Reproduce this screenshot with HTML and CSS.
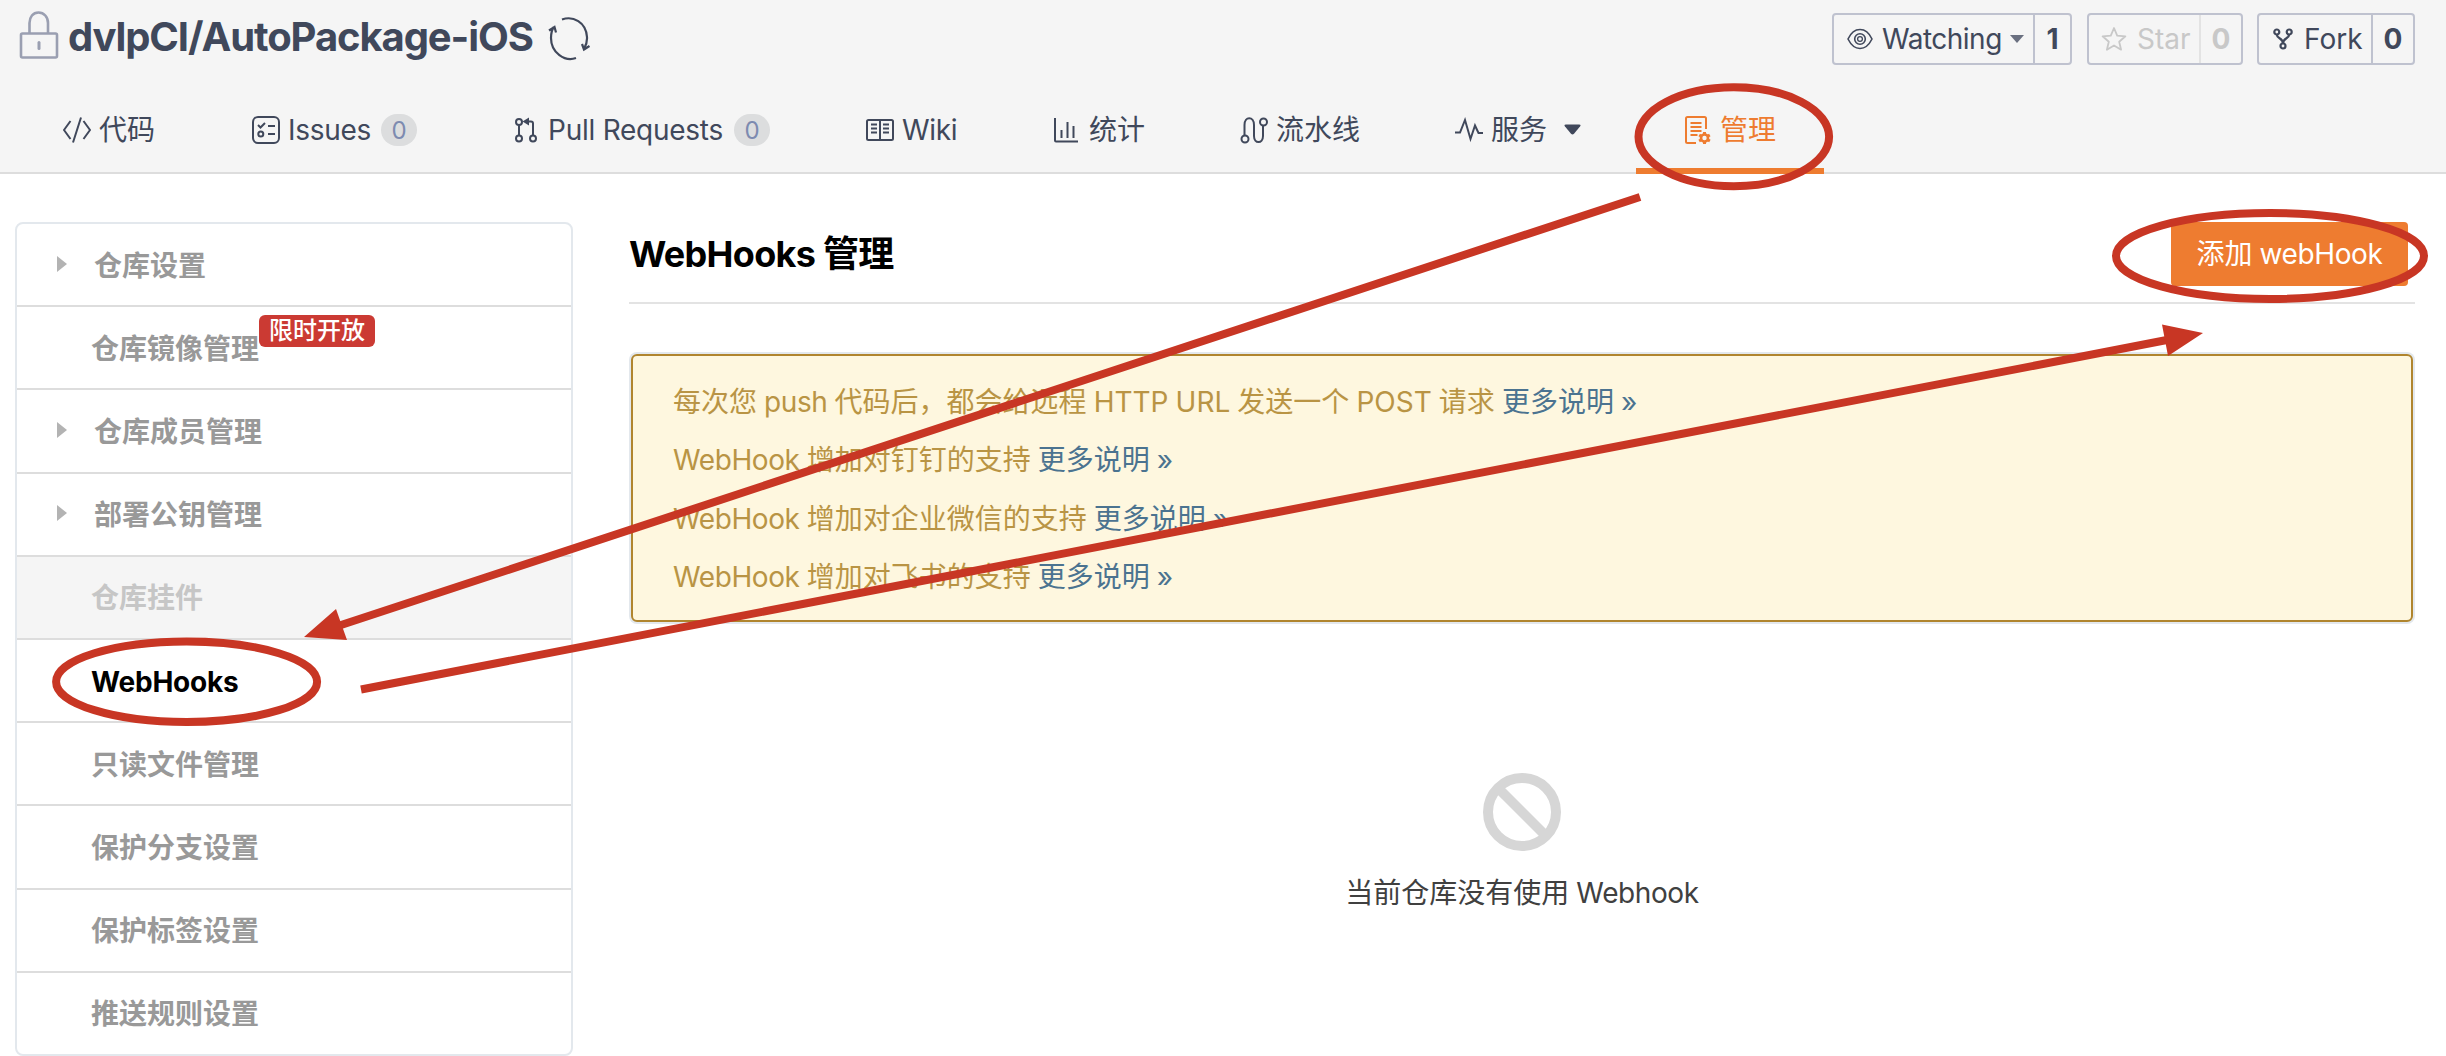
FILE: index.html
```html
<!DOCTYPE html>
<html lang="zh-CN">
<head>
<meta charset="utf-8">
<title>WebHooks 管理</title>
<link rel="stylesheet" href="styles.css">
</head>
<body>
<header class="repo-header">
  <div class="repo-top">
    <svg class="lock" width="40" height="54" viewBox="0 0 40 54" fill="none" stroke="#9a9fb1" stroke-width="2.6"><rect x="2" y="23.5" width="36" height="24" rx="1.5"/><path d="M10.500 23V13c0-6 3.500-10.500 9-10.500S29 7 29 13v10"/><path d="M20 32.500v6" stroke-linecap="round" stroke-width="3"/></svg>
    <h1 class="repo-name">dvlpCI/AutoPackage-iOS</h1>
    <svg class="sync" width="42" height="48" viewBox="0 0 42 48" fill="none" stroke="#40485b" stroke-width="2.200"><path d="M14 4.500C25 .5 38 7 39 22c.3 5-.8 8-2.800 11.500M28 43C17 47 3 38 3 23c0-5 .7-8 2.800-11M1 15.500l5.500-3.500 1.500 5.500M41.500 31l-5.500 3.500L34 29"/></svg>
    <div class="actions">
      <div class="action watch">
        <span class="action-main"><svg width="26" height="22" viewBox="0 0 26 22" fill="none" stroke="#40485b" stroke-width="1.600"><path d="M1 11C4 4.500 8 1.500 13 1.500S22 4.500 25 11c-3 6-7 9.500-12 9.500S4 17 1 11z"/><circle cx="13" cy="11" r="5.300"/><circle cx="13" cy="11" r="2.400" stroke-width="1.300"/></svg><span class="w-label">Watching</span><i class="caret"></i></span><b class="count">1</b>
      </div>
      <div class="action star">
        <span class="action-main"><svg width="26" height="26" viewBox="0 0 26 26" fill="none" stroke="#c8c8c8" stroke-width="1.800" stroke-linejoin="round"><path d="M13 2l3.200 7.600 8.200.7-6.200 5.400 1.900 8L13 19.400l-7.100 4.300 1.900-8L1.600 10.300l8.200-.7z"/></svg><span class="s-label">Star</span></span><b class="count">0</b>
      </div>
      <div class="action fork">
        <span class="action-main"><svg width="20" height="22" viewBox="0 0 20 22" fill="none" stroke="#40485b" stroke-width="2.200"><circle cx="3.800" cy="4" r="2.500"/><circle cx="16.200" cy="4" r="2.500"/><circle cx="10" cy="18" r="2.500"/><path d="M3.800 6.500c0 4.500 6.200 3 6.200 9 0-6 6.200-4.500 6.200-9"/></svg><span class="f-label">Fork</span></span><b class="count">0</b>
      </div>
    </div>
  </div>
  <nav class="tabs">
    <a class="tab code"><svg width="28" height="28" viewBox="0 0 28 28"><path d="M7.500 5L1 14l6.500 9M20.500 5L27 14l-6.500 9M18 1.500L10 26.500"/></svg>代码</a>
    <a class="tab issues"><svg width="28" height="28" viewBox="0 0 28 28"><rect x="1" y="1" width="26" height="26" rx="5"/><path d="M6 9l2.500 2.500L13 7M16 10h7M16 18h7"/><circle cx="8.800" cy="18" r="2.500"/></svg><span class="t-issues">Issues</span><em class="pill">0</em></a>
    <a class="tab pulls"><svg width="26" height="26" viewBox="0 0 26 26"><circle cx="5" cy="5" r="3"/><circle cx="5" cy="21.500" r="3"/><circle cx="19" cy="21.500" r="3"/><path d="M5 8v10.500M19 18.500V6.500Q19 4.500 17 4.500H13"/><path class="solid" d="M8.500 4.500L15 .5v8z"/></svg><span class="t-pulls">Pull Requests</span><em class="pill">0</em></a>
    <a class="tab wiki"><svg width="28" height="28" viewBox="0 0 28 28"><rect x="1" y="4" width="26" height="20" rx="1.500"/><path d="M14 4v20M5 8.500h6M5 12.500h6M5 16.500h6M17 8.500h6M17 12.500h6M17 16.500h6"/></svg><span class="t-wiki">Wiki</span></a>
    <a class="tab stats"><svg width="28" height="28" viewBox="0 0 28 28"><path d="M2 2v22.500q0 1 1 1h22M8.500 14v8M14.500 6v16M20.500 10v12"/></svg>统计</a>
    <a class="tab pipe"><svg width="28" height="28" viewBox="0 0 28 28"><circle cx="5" cy="23" r="3.500"/><circle cx="23.500" cy="6" r="3.500"/><path d="M4.500 19.500V9c0-9 9.500-9 9.500 0v11c0 8 9 8 9 0V9.500"/></svg>流水线</a>
    <a class="tab service"><svg width="28" height="28" viewBox="0 0 28 28"><path d="M0 16.500h5L10 4l5.500 19L20 9.500l3.500 7.500H28"/></svg>服务<svg class="drop" width="17" height="11" viewBox="0 0 17 11"><path class="solid" d="M2 .5h13q2.500 0 1 2L10 9.700q-1.500 1.600-3 0L1 2.500Q-.5.5 2 .5z"/></svg></a>
    <a class="tab manage active"><svg width="28" height="30" viewBox="0 0 28 30"><path d="M12 28H3.500Q2 28 2 26.500V3.500Q2 2 3.500 2h17Q22 2 22 3.500V14M6.500 8h11M6.500 12h11M6.500 16h11M6.500 20h7"/><circle cx="20.500" cy="23" r="3.500" stroke-width="2.600"/><path stroke-width="3" d="M20.500 17v2.500M20.500 26.500V29M15.200 20l2.200 1.300M23.700 24.800l2.200 1.200M25.800 20l-2.200 1.300M17.300 24.800L15.100 26"/></svg>管理</a>
  </nav>
</header>
<div class="content">
  <aside class="side">
    <a class="side-item group">仓库设置</a>
    <a class="side-item">仓库镜像管理<span class="flag">限时开放</span></a>
    <a class="side-item group">仓库成员管理</a>
    <a class="side-item group">部署公钥管理</a>
    <a class="side-item disabled">仓库挂件</a>
    <a class="side-item current">WebHooks</a>
    <a class="side-item">只读文件管理</a>
    <a class="side-item">保护分支设置</a>
    <a class="side-item">保护标签设置</a>
    <a class="side-item">推送规则设置</a>
  </aside>
  <main class="main">
    <div class="main-head"><h2>WebHooks 管理</h2><a class="add">添加 <span class="latin">webHook</span></a></div>
    <div class="notice">
      <p>每次您 <span class="latin">push</span> 代码后，都会给远程 HTTP URL 发送一个 POST 请求 <a>更多说明 »</a></p>
      <p><span class="latin">WebHook</span> 增加对钉钉的支持 <a>更多说明 »</a></p>
      <p><span class="latin">WebHook</span> 增加对企业微信的支持 <a>更多说明 »</a></p>
      <p><span class="latin">WebHook</span> 增加对飞书的支持 <a>更多说明 »</a></p>
    </div>
    <div class="empty">
      <svg width="78" height="78" viewBox="0 0 78 78" fill="none" stroke="#d6d6d6" stroke-width="10"><circle cx="39" cy="39" r="34"/><path d="M15 15l48 48"/></svg>
      <p>当前仓库没有使用 <span class="latin">Webhook</span></p>
    </div>
  </main>
</div>
<svg class="marks" width="2446" height="1056" viewBox="0 0 2446 1056">
  <g fill="none" stroke="#c83624" stroke-width="8">
    <ellipse cx="1733.800" cy="136.700" rx="95.300" ry="49.500"/>
    <ellipse cx="2270" cy="256" rx="154" ry="43"/>
    <ellipse cx="186.600" cy="681.700" rx="130.500" ry="40.300"/>
    <path d="M1640 197L335 627M361 689.500L2172 339"/>
  </g>
  <path fill="#c83624" d="M304 637l32-28 11 31zM2203 333l-41-8.500 6 31.500z"/>
</svg>
</body>
</html>
```
FILE: styles.css
```css
* { box-sizing: border-box; }
body {
  margin: 0;
  width: 2446px;
  height: 1056px;
  overflow: hidden;
  position: relative;
  background: #fff;
  color: #40485b;
  font: 28px/40px Inter, "Noto Sans CJK SC", sans-serif;
}
h1, h2, p { margin: 0; }
svg { display: block; flex: none; }
.latin { letter-spacing: -.4px; }
.repo-header {
  height: 174px;
  background: #f5f5f5;
  border-bottom: 2px solid #ddd;
}
.repo-top { display: flex; height: 84px; padding: 0 31px 0 19px; }
.lock { margin-top: 10px; }
.repo-name {
  width: 471px;
  margin: 13px 0 0 9px;
  font-size: 40px;
  line-height: 48px;
  font-weight: 700;
  letter-spacing: -1.1px;
  white-space: nowrap;
}
.sync { margin: 15px 0 0 9px; }
.actions { display: flex; margin: 13px 0 0 auto; height: 52px; }
.action {
  display: flex;
  border: 2px solid #bfc2cf;
  border-radius: 4px;
  line-height: 48px;
}
.action-main { display: flex; flex: 1; align-items: center; white-space: nowrap; }
.count {
  width: 37px;
  border-left: 2px solid #bfc2cf;
  text-align: center;
  font-weight: 700;
}
.watch { width: 240px; margin-right: 15px; }
.watch .action-main { padding-left: 13px; }
.w-label { width: 128px; margin-left: 9px; letter-spacing: -.5px; }
.star { width: 156px; margin-right: 14px; color: #c8c8c8; }
.star .action-main { padding-left: 12px; }
.star .count { width: 42px; border-color: #e3e3e3; }
.s-label { margin-left: 10px; }
.fork { width: 158px; }
.fork .action-main { padding-left: 14px; }
.fork .count { width: 42px; }
.f-label { margin-left: 11px; }
.caret {
  border: 7px solid transparent;
  border-top: 8px solid #6a7080;
  border-bottom: 0;
}
.tabs { display: flex; height: 90px; padding-left: 15px; }
.tab {
  display: flex;
  align-items: center;
  padding: 1px 0 0 48px;
  gap: 8px;
  white-space: nowrap;
  height: 90px;
}
.tab svg { fill: none; stroke: currentColor; stroke-width: 2; }
.tab .solid { fill: currentColor; stroke: none; }
.tab .drop { margin-left: 9px; }
.code { width: 189px; }
.issues { width: 262px; }
.pulls { width: 352px; }
.wiki { width: 187px; }
.stats { width: 187px; }
.pipe { width: 215px; }
.service { width: 229px; }
.manage { width: 188px; }
.tab.active { color: #ee7c30; border-bottom: 6px solid #ee7c30; padding-top: 7px; }
.t-issues { width: 85px; letter-spacing: -.3px; }
.t-pulls { width: 178px; letter-spacing: -.25px; }
.t-wiki { letter-spacing: -.3px; }
.pill {
  width: 36px;
  height: 32px;
  border-radius: 16px;
  background: #dcddde;
  color: #7d8bb0;
  font-style: normal;
  font-size: 24px;
  line-height: 33px;
  text-align: center;
}
.content { display: flex; gap: 56px; padding: 48px 31px 0 15px; }
.side {
  width: 558px;
  height: 834px;
  display: flex;
  flex-direction: column;
  border: 2px solid #e3e8ed;
  border-radius: 8px;
  overflow: hidden;
}
.side-item {
  flex: 1;
  display: flex;
  align-items: center;
  padding: 2px 0 0 74px;
  border-bottom: 2px solid #ddd;
  color: #999;
  font-weight: 600;
}
.side-item:last-child { border-bottom: 0; }
.side-item.group { padding-left: 40px; }
.group::before {
  content: "";
  margin: -4px 27px 0 0;
  border: 8px solid transparent;
  border-left: 10px solid #b3b3b3;
  border-right: 0;
}
.disabled { background: #f5f5f5; color: #c6c6c6; }
.current { color: #000; font-weight: 700; letter-spacing: -.2px; }
.flag {
  width: 116px;
  height: 32px;
  margin-top: -36px;
  border-radius: 6px;
  background: #cb3a33;
  color: #fff;
  font-size: 24px;
  font-weight: 500;
  line-height: 32px;
  text-align: center;
}
.main { flex: 1; }
.main-head {
  display: flex;
  justify-content: space-between;
  height: 82px;
  border-bottom: 2px solid #e3e3e3;
  padding-right: 7px;
}
h2 { font-size: 36px; line-height: 65px; color: #000; font-weight: 700; letter-spacing: -.7px; }
.add {
  width: 237px;
  height: 64px;
  border-radius: 4px;
  background: #ee7c30;
  color: #fff;
  line-height: 65px;
  text-align: center;
  word-spacing: -.8px;
}
.notice {
  height: 268px;
  margin: 50px 2px 0 2px;
  padding: 17px 40px;
  border: 2px solid #b0852e;
  border-radius: 6px;
  box-shadow: 0 0 0 2px #e3e8ed;
  background: #fef7df;
  color: #b99444;
  word-spacing: -.8px;
}
.notice p { line-height: 58.400px; white-space: nowrap; }
.notice a { color: #4b7390; }
.empty {
  display: flex;
  flex-direction: column;
  align-items: center;
  margin-top: 151px;
  gap: 22px;
  color: #404040;
  word-spacing: -.8px;
}
.marks { position: absolute; left: 0; top: 0; }
```
